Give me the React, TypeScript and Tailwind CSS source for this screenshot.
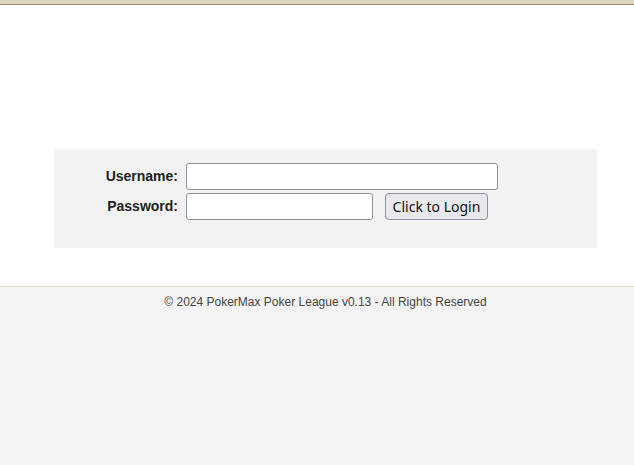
import React from 'react';

export default function App() {
    return (
        <div className="flex min-h-screen w-[651px] flex-col bg-[#f4f4f4] font-['Liberation_Sans',Arial,sans-serif] text-[#222]">
            {/* Header strip */}
            <div className="h-[4px] bg-[#ded4bf]" />
            <div className="h-[1px] bg-[#958c6c]" />

            {/* Main */}
            <main className="h-[281px] bg-white pt-[144px]">
                <div className="mx-[54px] bg-[#f2f2f2] pb-[28px] pt-[14px]">
                    <form className="grid grid-cols-[124px_auto] gap-x-[8px] gap-y-[3px]" onSubmit={(e) => e.preventDefault()}>
                        <label className="flex h-[27px] items-center justify-end text-[14px] font-bold">
                            Username:
                        </label>
                        <input
                            type="text"
                            className="h-[27px] w-[312px] rounded-[3px] border border-[#8f8f9d] bg-white px-1 text-[14px]"
                        />
                        <label className="flex h-[27px] items-center justify-end text-[14px] font-bold">
                            Password:
                        </label>
                        <div className="flex items-center gap-[12px]">
                            <input
                                type="password"
                                className="h-[27px] w-[187px] rounded-[3px] border border-[#8f8f9d] bg-white px-1 text-[14px]"
                            />
                            <button
                                type="submit"
                                className="h-[27px] w-[103px] rounded-[4px] border border-[#8f8f9d] bg-[#e9e9ed] font-['Noto_Sans',sans-serif] text-[14px] text-[#111]"
                            >
                                Click to Login
                            </button>
                        </div>
                    </form>
                </div>
            </main>

            {/* Footer */}
            <footer className="flex-1 border-t border-[#e2d9c6] pt-[6px] text-center text-[12px] text-[#444]">
                © 2024 PokerMax Poker League v0.13 - All Rights Reserved
            </footer>
        </div>
    );
}
